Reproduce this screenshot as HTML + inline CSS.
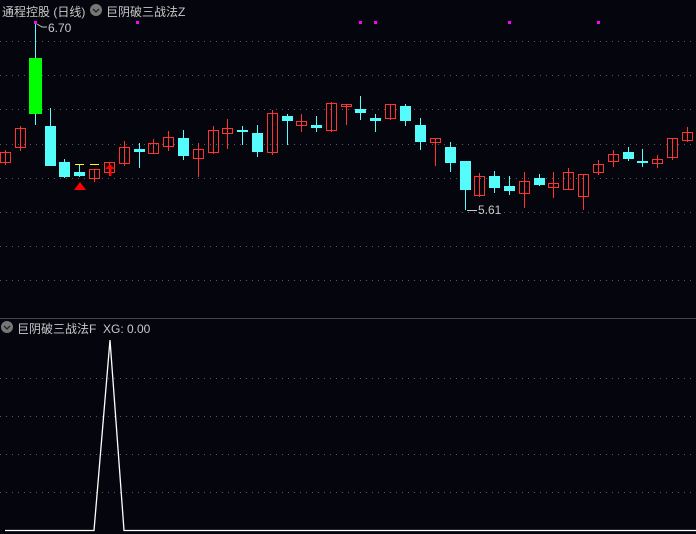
<!DOCTYPE html><html><head><meta charset="utf-8"><style>
body{margin:0;background:#05050d;width:696px;height:534px;overflow:hidden;font-family:"Liberation Sans","Noto Sans CJK SC",sans-serif}
svg{position:absolute;left:0;top:0}
.t{position:absolute;color:#c8c8c8;font-size:12px;white-space:nowrap}
</style></head><body>
<svg width="696" height="534">
<g stroke="#5a5a5a" stroke-dasharray="1,5" stroke-width="1">
<line x1="0" y1="41.5" x2="696" y2="41.5"/><line x1="0" y1="75.5" x2="696" y2="75.5"/><line x1="0" y1="109.5" x2="696" y2="109.5"/><line x1="0" y1="144.5" x2="696" y2="144.5"/><line x1="0" y1="178.5" x2="696" y2="178.5"/><line x1="0" y1="212.5" x2="696" y2="212.5"/><line x1="0" y1="246.5" x2="696" y2="246.5"/><line x1="0" y1="280.5" x2="696" y2="280.5"/>
<line x1="0" y1="378.5" x2="696" y2="378.5"/><line x1="0" y1="416.5" x2="696" y2="416.5"/><line x1="0" y1="454.5" x2="696" y2="454.5"/><line x1="0" y1="492.5" x2="696" y2="492.5"/>
</g>
<line x1="0" y1="318.5" x2="696" y2="318.5" stroke="#444" />
<g stroke="#ff3232" fill="none">
<line x1="5.5" y1="150" x2="5.5" y2="165"/><rect x="0.5" y="152.5" width="10" height="10"/>
<line x1="20.5" y1="126" x2="20.5" y2="151"/><rect x="15.5" y="128.5" width="10" height="19"/>
<line x1="94.5" y1="169" x2="94.5" y2="182"/><rect x="89.5" y="169.5" width="10" height="9"/>
<line x1="109.5" y1="162" x2="109.5" y2="176"/><rect x="104.5" y="162.5" width="10" height="10"/>
<line x1="124.5" y1="141" x2="124.5" y2="166"/><rect x="119.5" y="147.5" width="10" height="16"/>
<line x1="153.5" y1="139" x2="153.5" y2="154"/><rect x="148.5" y="143.5" width="10" height="10"/>
<line x1="168.5" y1="131" x2="168.5" y2="151"/><rect x="163.5" y="137.5" width="10" height="9"/>
<line x1="198.5" y1="143" x2="198.5" y2="177"/><rect x="193.5" y="149.5" width="10" height="9"/>
<line x1="213.5" y1="126" x2="213.5" y2="154"/><rect x="208.5" y="130.5" width="10" height="22"/>
<line x1="227.5" y1="119" x2="227.5" y2="149"/><rect x="222.5" y="128.5" width="10" height="5"/>
<line x1="272.5" y1="110" x2="272.5" y2="155"/><rect x="267.5" y="113.5" width="10" height="39"/>
<line x1="301.5" y1="114" x2="301.5" y2="132"/><rect x="296.5" y="121.5" width="10" height="4"/>
<line x1="331.5" y1="102" x2="331.5" y2="132"/><rect x="326.5" y="103.5" width="10" height="27"/>
<line x1="346.5" y1="104" x2="346.5" y2="125"/><rect x="341.5" y="104.5" width="10" height="2"/>
<line x1="390.5" y1="104" x2="390.5" y2="120"/><rect x="385.5" y="104.5" width="10" height="14"/>
<line x1="435.5" y1="138" x2="435.5" y2="166"/><rect x="430.5" y="138.5" width="10" height="4"/>
<line x1="479.5" y1="173" x2="479.5" y2="197"/><rect x="474.5" y="176.5" width="10" height="19"/>
<line x1="524.5" y1="172" x2="524.5" y2="208"/><rect x="519.5" y="181.5" width="10" height="12"/>
<line x1="553.5" y1="172" x2="553.5" y2="198"/><rect x="548.5" y="183.5" width="10" height="4"/>
<line x1="568.5" y1="168" x2="568.5" y2="190"/><rect x="563.5" y="172.5" width="10" height="17"/>
<line x1="583.5" y1="174" x2="583.5" y2="210"/><rect x="578.5" y="174.5" width="10" height="22"/>
<line x1="598.5" y1="160" x2="598.5" y2="175"/><rect x="593.5" y="164.5" width="10" height="8"/>
<line x1="613.5" y1="150" x2="613.5" y2="167"/><rect x="608.5" y="154.5" width="10" height="7"/>
<line x1="657.5" y1="155" x2="657.5" y2="168"/><rect x="652.5" y="159.5" width="10" height="4"/>
<line x1="672.5" y1="138" x2="672.5" y2="160"/><rect x="667.5" y="138.5" width="10" height="19"/>
<line x1="687.5" y1="127" x2="687.5" y2="142"/><rect x="682.5" y="132.5" width="10" height="8"/>
</g>
<g stroke="#54fcfc" fill="#54fcfc">
<line x1="35.5" y1="22" x2="35.5" y2="125"/>
<line x1="50.5" y1="108" x2="50.5" y2="166"/><rect x="45" y="126" width="11" height="40" stroke="none"/>
<line x1="64.5" y1="159" x2="64.5" y2="178"/><rect x="59" y="162" width="11" height="15" stroke="none"/>
<line x1="79.5" y1="165" x2="79.5" y2="177"/><rect x="74" y="172" width="11" height="4" stroke="none"/>
<line x1="139.5" y1="143" x2="139.5" y2="168"/><rect x="134" y="149" width="11" height="3" stroke="none"/>
<line x1="183.5" y1="130" x2="183.5" y2="160"/><rect x="178" y="138" width="11" height="18" stroke="none"/>
<line x1="242.5" y1="126" x2="242.5" y2="145"/><rect x="237" y="130" width="11" height="2" stroke="none"/>
<line x1="257.5" y1="125" x2="257.5" y2="157"/><rect x="252" y="133" width="11" height="19" stroke="none"/>
<line x1="287.5" y1="114" x2="287.5" y2="145"/><rect x="282" y="116" width="11" height="5" stroke="none"/>
<line x1="316.5" y1="116" x2="316.5" y2="132"/><rect x="311" y="125" width="11" height="3" stroke="none"/>
<line x1="360.5" y1="96" x2="360.5" y2="120"/><rect x="355" y="109" width="11" height="4" stroke="none"/>
<line x1="375.5" y1="114" x2="375.5" y2="132"/><rect x="370" y="118" width="11" height="3" stroke="none"/>
<line x1="405.5" y1="104" x2="405.5" y2="126"/><rect x="400" y="106" width="11" height="15" stroke="none"/>
<line x1="420.5" y1="118" x2="420.5" y2="150"/><rect x="415" y="125" width="11" height="17" stroke="none"/>
<line x1="450.5" y1="142" x2="450.5" y2="172"/><rect x="445" y="147" width="11" height="16" stroke="none"/>
<line x1="465.5" y1="161" x2="465.5" y2="210"/><rect x="460" y="161" width="11" height="29" stroke="none"/>
<line x1="494.5" y1="171" x2="494.5" y2="193"/><rect x="489" y="176" width="11" height="12" stroke="none"/>
<line x1="509.5" y1="176" x2="509.5" y2="195"/><rect x="504" y="186" width="11" height="5" stroke="none"/>
<line x1="539.5" y1="174" x2="539.5" y2="186"/><rect x="534" y="178" width="11" height="7" stroke="none"/>
<line x1="628.5" y1="147" x2="628.5" y2="161"/><rect x="623" y="152" width="11" height="7" stroke="none"/>
<line x1="642.5" y1="149" x2="642.5" y2="167"/><rect x="637" y="161" width="11" height="2" stroke="none"/>
</g>
<rect x="29" y="58" width="13" height="56" fill="#00ff00"/>
<g stroke="#ffff00"><line x1="75" y1="164.5" x2="84" y2="164.5"/><line x1="90" y1="164.5" x2="99" y2="164.5"/></g>
<polygon points="74,190 80,182 86,190" fill="#ff0000"/>
<polygon points="105,169 110,164 115,169" fill="#ff0000"/><line x1="110.5" y1="166" x2="110.5" y2="176" stroke="#ff0000" stroke-width="2"/>
<g fill="#ff00ff"><rect x="34" y="21" width="3" height="3"/><rect x="136" y="21" width="3" height="3"/><rect x="359" y="21" width="3" height="3"/><rect x="374" y="21" width="3" height="3"/><rect x="508" y="21" width="3" height="3"/><rect x="597" y="21" width="3" height="3"/></g>
<polyline points="37,24 42,27 47,27" stroke="#c8c8c8" fill="none"/>
<line x1="467" y1="210.5" x2="477" y2="210.5" stroke="#c8c8c8"/>
<polyline points="5,530.5 94,530.5 110,340 124,530.5 696,530.5" stroke="#fff" fill="none" stroke-width="1.3"/>
<circle cx="96" cy="10" r="6" fill="#777"/><polyline points="93,9 96,12 99,9" stroke="#222" fill="none" stroke-width="1.3"/>
<circle cx="7" cy="327" r="6" fill="#777"/><polyline points="4,326 7,329 10,326" stroke="#222" fill="none" stroke-width="1.3"/>
</svg>
<div class="t" style="left:2px;top:3px">通程控股 (日线)</div>
<div class="t" style="left:106px;top:3px">巨阴破三战法Z</div>
<div class="t" style="left:48px;top:21px">6.70</div>
<div class="t" style="left:478px;top:203px">5.61</div>
<div class="t" style="left:17px;top:320px">巨阴破三战法F&nbsp; XG: 0.00</div>
</body></html>
